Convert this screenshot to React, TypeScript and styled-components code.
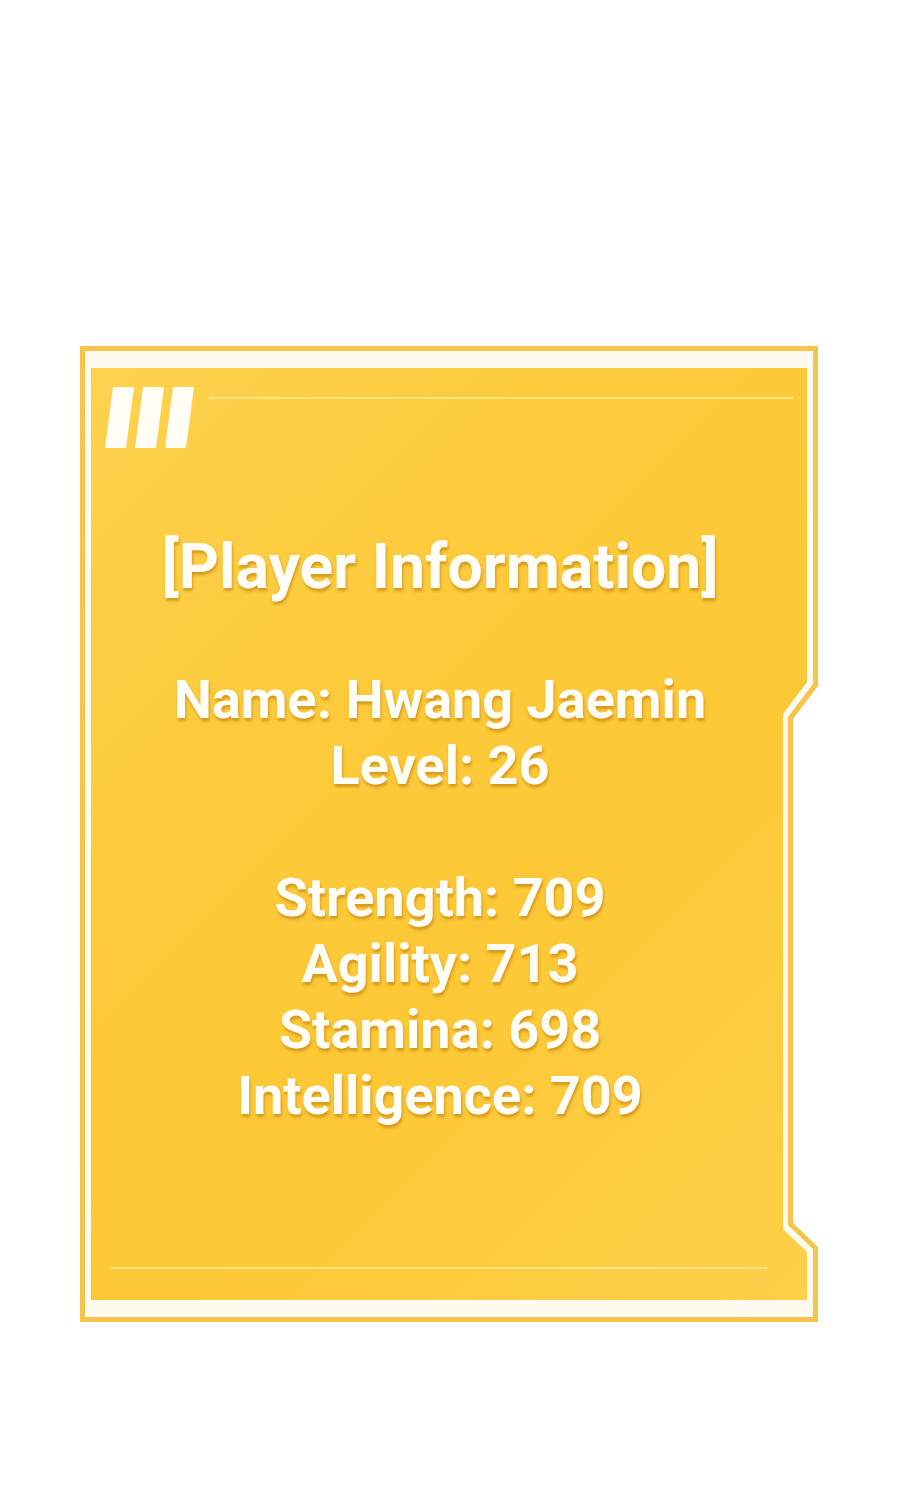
import styled, { createGlobalStyle } from 'styled-components';

const GlobalStyle = createGlobalStyle`
  body {
    margin: 0;
    background: #ffffff;
    font-family: Roboto, 'Liberation Sans', Arial, sans-serif;
  }
`;

// notched right edge shared by every layer of the frame
const notch = (top: number, topEnd: number, bottom: number, bottomEnd: number, depth: number) => `
  clip-path: polygon(
    0 0,
    100% 0,
    100% ${top}px,
    calc(100% - ${depth}px) ${topEnd}px,
    calc(100% - ${depth}px) calc(100% - ${bottomEnd}px),
    100% calc(100% - ${bottom}px),
    100% 100%,
    0 100%
  );
`;

const Page = styled.div`
  width: 900px;
  height: 1500px;
  box-sizing: border-box;
  padding: 346px 0 0 80px;
  background: #ffffff;
`;

const Frame = styled.div`
  width: 738px;
  height: 976px;
  box-sizing: border-box;
  padding: 5px;
  background: #f6c44b;
  ${notch(340, 373, 75, 99, 25)}
`;

const FrameGap = styled.div`
  height: 100%;
  box-sizing: border-box;
  padding: 17px 6px 17px 6px;
  background: #fffbf0;
  ${notch(333, 366, 68, 92, 25)}
`;

const Panel = styled.div`
  height: 100%;
  display: flex;
  flex-direction: column;
  background: linear-gradient(
    135deg,
    #fdd24f 0%,
    #fccb3c 30%,
    #fcc835 60%,
    #fdd04a 100%
  );
  ${notch(314, 346, 48, 71, 24)}
`;

const Header = styled.div`
  display: flex;
  align-items: flex-start;
  padding: 19px 14px 0 18px;
`;

const Stripes = styled.div`
  display: flex;
  gap: 9px;
`;

const Stripe = styled.span`
  display: block;
  width: 21px;
  height: 61px;
  background: #fffdf6;
  transform: skewX(-7.5deg);
`;

const Rule = styled.div<{ $inset?: string }>`
  height: 2px;
  background: #fde57f;
  margin: ${(p) => p.$inset ?? '0'};
`;

const HeaderRule = styled(Rule)`
  flex: 1;
`;

const Info = styled.div`
  flex: 1;
  display: flex;
  flex-direction: column;
  align-items: center;
  padding: 86px 18px 0 0;
  color: #fffdf5;
  font-weight: 700;
  text-shadow: 1px 3px 3px rgba(190, 120, 8, 0.6);
`;

const Line = styled.div<{ $size?: number; $gap?: number }>`
  font-size: ${(p) => p.$size ?? 54}px;
  line-height: 66px;
  white-space: nowrap;
  margin-bottom: ${(p) => p.$gap ?? 0}px;
`;

const player = {
  name: 'Hwang Jaemin',
  level: 26,
  stats: [
    ['Strength', 709],
    ['Agility', 713],
    ['Stamina', 698],
    ['Intelligence', 709],
  ] as const,
};

export default function App() {
  return (
    <Page>
      <GlobalStyle />
      <Frame>
        <FrameGap>
          <Panel>
            <Header>
              <Stripes>
                <Stripe />
                <Stripe />
                <Stripe />
              </Stripes>
              <HeaderRule $inset="10px 0 0 19px" />
            </Header>
            <Info>
              <Line $size={62.5} $gap={67}>[Player Information]</Line>
              <Line>Name: {player.name}</Line>
              <Line $gap={66}>Level: {player.level}</Line>
              {player.stats.map(([label, value]) => (
                <Line key={label}>
                  {label}: {value}
                </Line>
              ))}
            </Info>
            <Rule $inset="0 40px 31px 19px" />
          </Panel>
        </FrameGap>
      </Frame>
    </Page>
  );
}
